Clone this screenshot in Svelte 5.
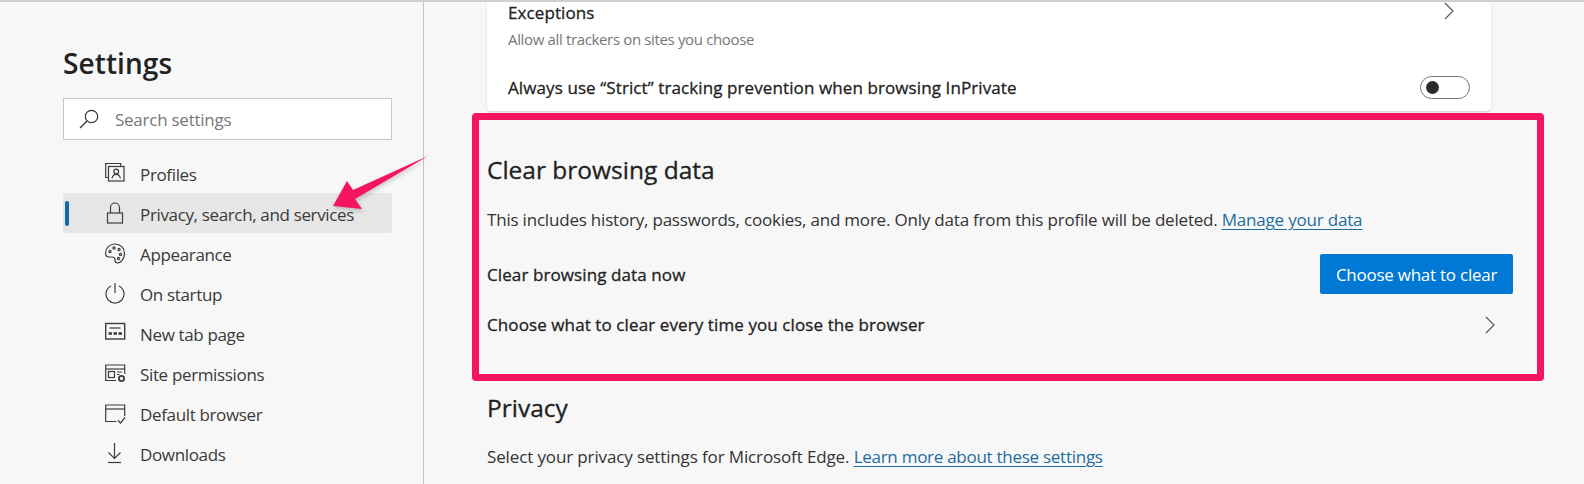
<script>
	const navItems = [
		{ label: 'Profiles', icon: 'profiles' },
		{ label: 'Privacy, search, and services', icon: 'lock', active: true },
		{ label: 'Appearance', icon: 'palette' },
		{ label: 'On startup', icon: 'power' },
		{ label: 'New tab page', icon: 'newtab' },
		{ label: 'Site permissions', icon: 'site' },
		{ label: 'Default browser', icon: 'browser' },
		{ label: 'Downloads', icon: 'download' }
	];
</script>

<div class="page">
	<aside class="sidebar">
		<h1>Settings</h1>
		<div class="search">
			<svg width="24" height="24" viewBox="0 0 24 24" fill="none" stroke="#333" stroke-width="1.2">
				<circle cx="14.5" cy="9.5" r="6.2" />
				<path d="M10 14 3 21" />
			</svg>
			<span>Search settings</span>
		</div>
		<nav>
			{#each navItems as item}
				<div class="nav-item" class:active={item.active}>
					<svg width="22" height="22" viewBox="0 0 22 22" fill="none" stroke="#3c3c3c" stroke-width="1.2">
						{#if item.icon === 'profiles'}
							<path d="M3.500 15.500H.7V1.500h15v3" />
							<rect x="3.500" y="4.500" width="15.500" height="14.500" />
							<circle cx="11.200" cy="9.500" r="2.400" />
							<path d="M7 16.500c.5-3 2-4.200 4.200-4.200s3.700 1.200 4.200 4.200" />
						{:else if item.icon === 'lock'}
							<rect x="2.500" y="11" width="15" height="10" />
							<path d="M5.500 11V5.500a4.500 4.500 0 0 1 9 0V11" />
						{:else if item.icon === 'palette'}
							<path d="M10 2c5.500 0 9.500 4 9.500 9.500S15.500 21 12.500 21c-2.500 0-2.500-1.500-2.500-3s-.5-3-3-3H3.500C1.500 15 .6 13.500.6 11 .6 6 4.500 2 10 2z" />
							<circle cx="5" cy="9.500" r="1.100" />
							<circle cx="9" cy="6" r="1.100" />
							<circle cx="14" cy="7.500" r="1.100" />
							<circle cx="15.500" cy="12.500" r="1.100" />
							<circle cx="13.500" cy="16.500" r="1.100" />
						{:else if item.icon === 'power'}
							<path d="M6 4a9 9 0 1 0 8 0" />
							<path d="M10 1v10" />
						{:else if item.icon === 'newtab'}
							<rect x=".7" y="1.500" width="19" height="15.500" stroke-width="1.400" />
							<path d="M4.500 6h11" />
							<path d="M3.500 11.500H7M8.500 11.500H12M13.500 11.500H17" stroke-width="2.400" />
						{:else if item.icon === 'site'}
							<path d="M11 18.500H.7V3h19v9" />
							<path d="M.7 7h19" />
							<rect x="3.500" y="9.500" width="6" height="6" />
							<path d="M12 10h5M12 12.500h2.500" />
							<circle cx="16.500" cy="16.500" r="2.600" stroke-width="1.800" />
						{:else if item.icon === 'browser'}
							<path d="M11.500 19.500H.7V3h19v11" />
							<path d="M.7 7h19" />
							<path d="m13 18.500 2.500 2.500 4.500-5.500" />
						{:else if item.icon === 'download'}
							<path d="M9.500 1v15.500" />
							<path d="m3.500 10.500 6 6 6-6" />
							<path d="M3 20.500h13" />
						{/if}
					</svg>
					<span>{item.label}</span>
				</div>
			{/each}
		</nav>
	</aside>

	<main>
		<div class="card">
			<div class="card-row first">
				<div>
					<div class="strong">Exceptions</div>
					<div class="hint">Allow all trackers on sites you choose</div>
				</div>
				<svg class="chevron" width="12" height="18" viewBox="0 0 12 18" fill="none" stroke="#555" stroke-width="1.100">
					<path d="m2 1 8 8-8 8" />
				</svg>
			</div>
			<div class="card-row second">
				<div class="strong">Always use “Strict” tracking prevention when browsing InPrivate</div>
				<div class="toggle"><i></i></div>
			</div>
		</div>

		<section class="clear">
			<h2>Clear browsing data</h2>
			<p>This includes history, passwords, cookies, and more. Only data from this profile will be deleted. <a href="#data">Manage your data</a></p>
			<div class="row now">
				<span class="strong">Clear browsing data now</span>
				<button>Choose what to clear</button>
			</div>
			<div class="row every">
				<span class="strong">Choose what to clear every time you close the browser</span>
				<svg class="chevron" width="12" height="18" viewBox="0 0 12 18" fill="none" stroke="#555" stroke-width="1.100">
					<path d="m2 1 8 8-8 8" />
				</svg>
			</div>
		</section>

		<section class="privacy">
			<h2>Privacy</h2>
			<p>Select your privacy settings for Microsoft Edge. <a href="#more">Learn more about these settings</a></p>
		</section>
	</main>

	<svg class="arrow" width="110" height="70" viewBox="0 0 110 70">
		<path d="M6 54 20 29l6 9 75-34-73 43 7 10z" fill="#f5145f" />
	</svg>
</div>

<style>
	:global(body) {
		background: #f7f7f7;
	}

	.page {
		position: relative;
		display: flex;
		height: 484px;
		overflow: hidden;
		border-top: 2px solid #cfcfcf;
		box-sizing: border-box;
		font-family: 'Open Sans', 'Noto Sans', sans-serif;
		font-size: 17px;
		letter-spacing: -0.25px;
		color: #2b2b2b;
	}

	.sidebar {
		flex: none;
		width: 424px;
		box-sizing: border-box;
		padding: 42px 31px 0 63px;
		border-right: 1px solid #c4c4c4;
	}

	h1 {
		margin: 0 0 16px;
		font-size: 28px;
		line-height: 38px;
		font-weight: 600;
		letter-spacing: 0.1px;
		color: #222;
	}

	.search {
		display: flex;
		align-items: center;
		gap: 14px;
		height: 42px;
		box-sizing: border-box;
		padding-left: 13px;
		background: #fff;
		border: 1px solid #c8c8c8;
		color: #777;
	}

	nav {
		margin-top: 13px;
	}

	.nav-item {
		display: flex;
		align-items: center;
		gap: 13px;
		height: 40px;
		padding-left: 42px;
		border-radius: 2px;
		position: relative;
		color: #3a3a3a;
		letter-spacing: -0.35px;
	}

	.nav-item span {
		padding-top: 2px;
	}

	.nav-item.active {
		background: #e6e6e6;
	}

	.nav-item.active::before {
		content: '';
		position: absolute;
		left: 2px;
		top: 8px;
		width: 4px;
		height: 25px;
		border-radius: 2px;
		background: #0f69b4;
	}

	main {
		flex: 1;
		padding-left: 48px;
	}

	.card {
		width: 1004px;
		height: 109px;
		box-sizing: border-box;
		margin-left: 15px;
		padding: 0 21px;
		background: #fff;
		border-radius: 0 0 4px 4px;
		box-shadow: 0 1px 2px rgba(0, 0, 0, 0.15);
	}

	.card-row {
		display: flex;
		justify-content: space-between;
		align-items: flex-start;
	}

	.first {
		height: 61px;
		padding-right: 15px;
	}

	.second {
		align-items: center;
		height: 23px;
		margin-top: 13px;
	}

	.strong {
		font-weight: 500;
		letter-spacing: 0.1px;
		color: #222;
		line-height: 22px;
		-webkit-text-stroke: 0.3px #222;
	}

	.hint {
		margin-top: 5px;
		font-size: 15px;
		line-height: 20px;
		letter-spacing: -0.35px;
		color: #777;
		-webkit-text-stroke: 0;
	}

	.toggle {
		width: 50px;
		height: 23px;
		box-sizing: border-box;
		padding-left: 5px;
		display: flex;
		align-items: center;
		border: 1px solid #777;
		border-radius: 12px;
	}

	.toggle i {
		width: 13px;
		height: 13px;
		border-radius: 50%;
		background: #2b2b2b;
	}

	.clear {
		width: 1072px;
		height: 268px;
		box-sizing: border-box;
		margin-top: 2px;
		padding: 35px 24px 0 8px;
		border: 7px solid #f5145f;
		border-radius: 4px;
	}

	h2 {
		margin: 0;
		font-size: 24.5px;
		line-height: 30px;
		font-weight: 500;
		letter-spacing: 0;
		color: #222;
		-webkit-text-stroke: 0.3px #222;
	}

	p {
		margin: 0;
		line-height: 24px;
		color: #333;
	}

	.clear p {
		margin-top: 23px;
		letter-spacing: -0.2px;
	}

	a {
		color: #1f6d9e;
		text-decoration: underline;
		text-underline-offset: 3px;
	}

	.row {
		display: flex;
		justify-content: space-between;
		align-items: center;
	}

	.now {
		margin-top: 22px;
	}

	.now .strong {
		padding-top: 2px;
	}

	.every {
		margin-top: 21px;
		height: 20px;
		padding-right: 17px;
	}

	button {
		width: 193px;
		height: 40px;
		border: 0;
		border-radius: 2px;
		background: #0078d4;
		color: #fff;
		font: inherit;
		letter-spacing: inherit;
	}

	.privacy {
		margin: 12px 0 0 15px;
	}

	.privacy p {
		margin-top: 22px;
		letter-spacing: -0.13px;
	}

	.privacy a {
		letter-spacing: -0.27px;
	}

	.arrow {
		position: absolute;
		left: 327px;
		top: 150px;
		filter: drop-shadow(1px 2px 2px rgba(0, 0, 0, 0.2));
	}
</style>
